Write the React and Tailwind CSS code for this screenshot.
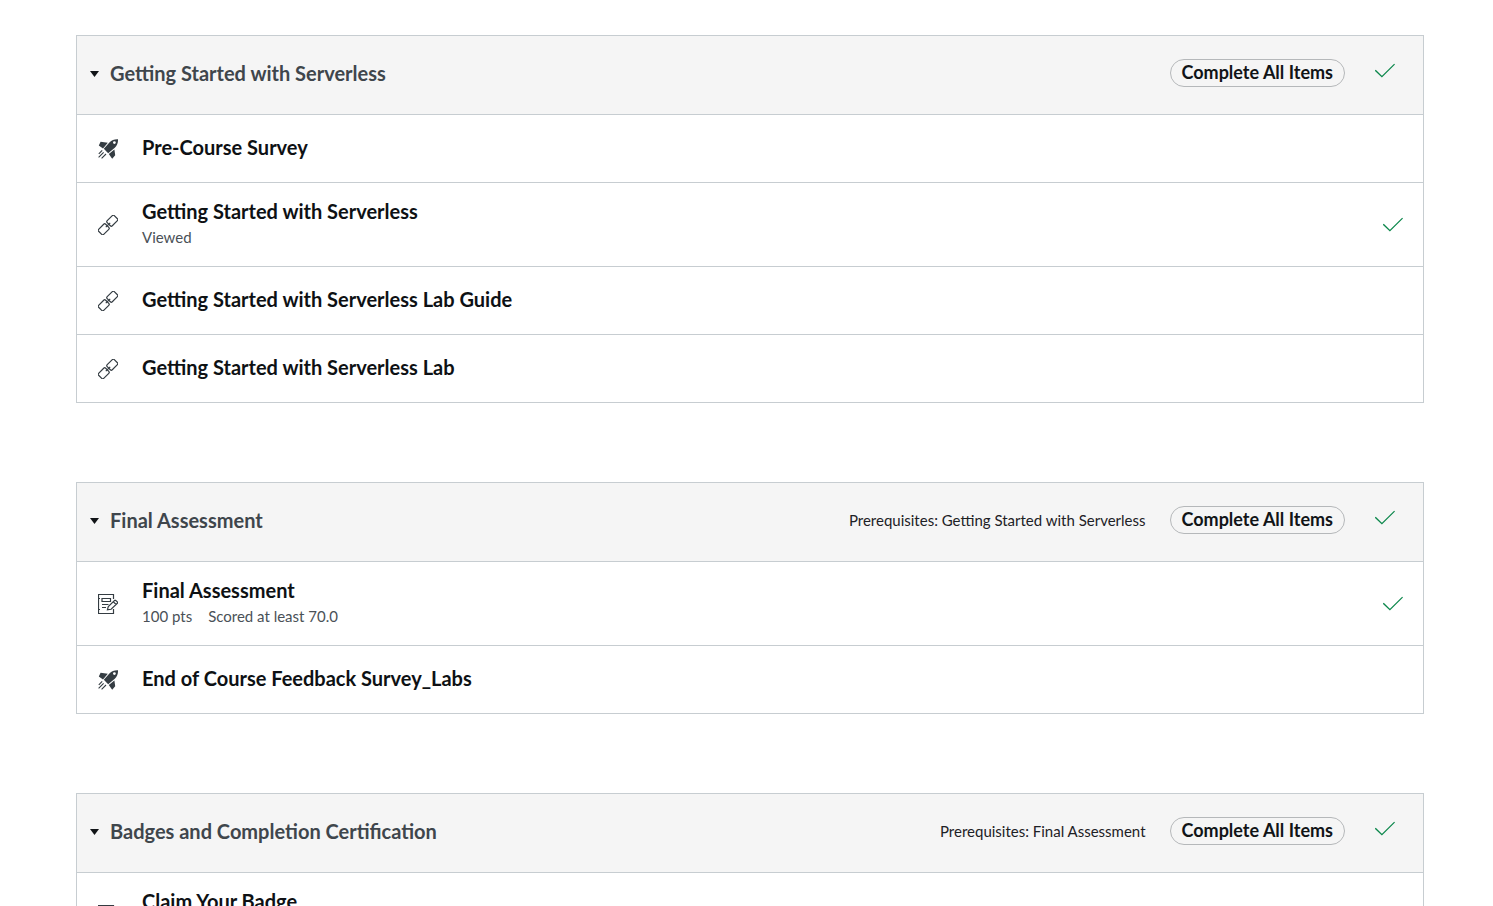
import React from 'react';

function RocketIcon() {
  return (
    <svg viewBox="0 0 20 20" className="size-5 text-[#343c42]" fill="currentColor" aria-hidden="true">
      <path
        fillRule="evenodd"
        d="M20 .2c-3.400-.2-6.200.8-8.600 3.200L5.800 9.800l4.400 4.400 6.600-5.400c2.400-2.200 3.400-5.200 3.200-8.600zM16.400 2.200a1.400 1.400 0 1 1 0 2.800 1.400 1.400 0 0 1 0-2.800z"
      />
      <path d="M9.800 3.800 2.600 2.800.8 6.600 5 9.400zM16.400 10.400l.8 5.800-3 3.600-3.400-4.800z" />
      <path d="M4.200 11.400.8 14.800M5.600 13.400.6 18.400M8 15 3.600 19.400" fill="none" stroke="currentColor" strokeWidth="1.100" />
    </svg>
  );
}

function LinkIcon() {
  return (
    <svg viewBox="0 0 20 20" className="size-5 text-[#343c42]" fill="none" stroke="currentColor" strokeWidth="1.200" strokeLinejoin="round" aria-hidden="true">
      <rect x="-5" y="-3.600" width="10" height="7.200" rx="1.400" transform="translate(14.300 5.700) rotate(-45)" />
      <rect x="-5" y="-3.600" width="10" height="7.200" rx="1.400" transform="translate(5.700 14.300) rotate(-45)" />
      <path d="m7.800 12.200 4.400-4.400" />
    </svg>
  );
}

function AssignmentIcon() {
  return (
    <svg viewBox="0 0 20 20" className="size-5 text-[#343c42]" fill="none" stroke="currentColor" strokeWidth="1.200" aria-hidden="true">
      <path d="M15.500 5V.5H.5v19h15V15" />
      <path d="M.5 4.500h1.500M.5 15.500h1.500M4 4.500h8.500v3H4zM4 10.500h6.500M4 13.500h4" />
      <path d="m9.400 15.800.9-3.200 6.400-6.300.9 0 1.900 1.900 0 .9-6.400 6.200zM15.200 7.600l2.900 2.900" />
    </svg>
  );
}

function CheckIcon() {
  return (
    <svg viewBox="0 0 20 20" className="size-5 text-[#0b874b]" fill="none" stroke="currentColor" strokeWidth="1.300" role="img" aria-label="Completed">
      <path d="m.3 9.300 6.600 6.400L19.600 3.100" />
    </svg>
  );
}

const icons = { rocket: RocketIcon, link: LinkIcon, assignment: AssignmentIcon };

const modules = [
  {
    title: 'Getting Started with Serverless',
    items: [
      { icon: 'rocket', title: 'Pre-Course Survey' },
      { icon: 'link', title: 'Getting Started with Serverless', details: ['Viewed'], done: true },
      { icon: 'link', title: 'Getting Started with Serverless Lab Guide' },
      { icon: 'link', title: 'Getting Started with Serverless Lab' },
    ],
  },
  {
    title: 'Final Assessment',
    prerequisites: 'Getting Started with Serverless',
    items: [
      { icon: 'assignment', title: 'Final Assessment', details: ['100 pts', 'Scored at least 70.0'], done: true },
      { icon: 'rocket', title: 'End of Course Feedback Survey_Labs' },
    ],
  },
  {
    title: 'Badges and Completion Certification',
    prerequisites: 'Final Assessment',
    items: [{ icon: 'assignment', title: 'Claim Your Badge', details: [] }],
  },
];

function ModuleItem({ item }) {
  const Icon = icons[item.icon];
  return (
    <li className={`flex items-center border-b border-[#c7cdd1] pl-[21px] pr-5 ${item.details ? 'h-[84px]' : 'h-[68px]'}`}>
      <Icon />
      <div className="ml-6 flex-1 pb-1">
        <a href="#" className="block text-xl leading-6 font-bold text-[#0e1114]">
          {item.title}
        </a>
        {item.details && (
          <div className="flex min-h-6 gap-4 pt-1 text-[15px] leading-5 text-[#4a5157]">
            {item.details.map((detail) => (
              <span key={detail}>{detail}</span>
            ))}
          </div>
        )}
      </div>
      {item.done && <CheckIcon />}
    </li>
  );
}

function Module({ module }) {
  return (
    <section className="border-x border-t border-[#c7cdd1] bg-white">
      <header className="flex h-[79px] items-center border-b border-[#c7cdd1] bg-[#f5f5f5] pr-7 pb-1 pl-[13px]">
        <h2 className="flex-1">
          <button type="button" aria-expanded="true" className="flex items-center gap-[11px] text-xl leading-6 font-bold text-[#3f464c]">
            <svg viewBox="0 0 9 8" className="h-2 w-[9px] text-[#111417]" fill="currentColor" aria-hidden="true">
              <path d="M0 2h9L4.500 8z" />
            </svg>
            {module.title}
          </button>
        </h2>
        {module.prerequisites && (
          <p className="mr-6 text-[15px] leading-5 text-[#1d2125]">Prerequisites: {module.prerequisites}</p>
        )}
        <span className="rounded-full border border-[#b5b8ba] px-[11px] pb-[2px] text-lg leading-6 font-bold text-[#111417]">
          Complete All Items
        </span>
        <span className="ml-[30px] pb-1">
          <CheckIcon />
        </span>
      </header>
      <ul>
        {module.items.map((item) => (
          <ModuleItem key={item.title} item={item} />
        ))}
      </ul>
    </section>
  );
}

export default function App() {
  return (
    <div className="h-screen overflow-hidden bg-white font-['Lato',sans-serif]">
      <main className="flex flex-col gap-[79px] pt-[35px] pr-[69px] pl-[76px]">
        {modules.map((module) => (
          <Module key={module.title} module={module} />
        ))}
      </main>
    </div>
  );
}
